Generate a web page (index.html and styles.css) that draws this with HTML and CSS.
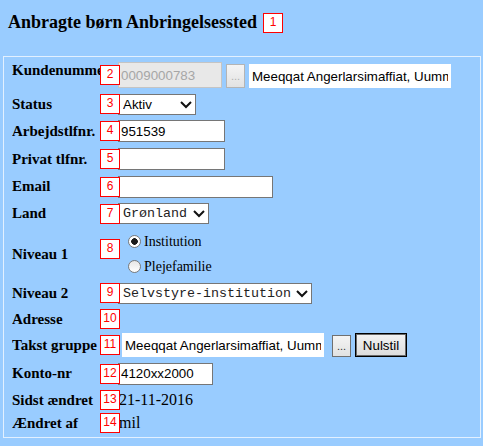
FILE: index.html
```html
<!DOCTYPE html>
<html lang="da">
<head>
  <meta charset="UTF-8" />
  <title>Anbragte børn Anbringelsessted</title>
  <link rel="stylesheet" href="styles.css">
</head>
<body>

<div class="title">Anbragte børn Anbringelsessted<span class="badge badge-inline">1</span></div>

<fieldset class="panel">

  <div class="row r-kunde">
    <label class="lbl lbl-top">Kundenummer</label>
    <span class="badge">2</span>
    <div class="ctrl">
      <input class="txt txt-off w-kunde" value="0009000783" disabled />
      <button class="dots" disabled>...</button>
      <input class="plain" value="Meeqqat Angerlarsimaffiat, Uummannaq" readonly />
    </div>
  </div>

  <div class="row r-status">
    <label class="lbl">Status</label>
    <span class="badge">3</span>
    <span class="selwrap">
      <select class="sel w-status"><option>Aktiv</option><option>Passiv</option></select>
      <svg class="chev" width="12" height="8" viewBox="0 0 12 8"><polyline points="1,1 6,6 11,1" fill="none" stroke="#111" stroke-width="2"/></svg>
    </span>
  </div>

  <div class="row r-arb">
    <label class="lbl">Arbejdstlfnr.</label>
    <span class="badge">4</span>
    <input class="txt w-tlf" value="951539" />
  </div>

  <div class="row r-priv">
    <label class="lbl">Privat tlfnr.</label>
    <span class="badge">5</span>
    <input class="txt w-tlf" value="" />
  </div>

  <div class="row r-email">
    <label class="lbl">Email</label>
    <span class="badge">6</span>
    <input class="txt w-email" value="" />
  </div>

  <div class="row r-land">
    <label class="lbl">Land</label>
    <span class="badge">7</span>
    <span class="selwrap">
      <select class="sel sel-mono w-land"><option>Grønland</option><option>Danmark</option></select>
      <svg class="chev" width="12" height="8" viewBox="0 0 12 8"><polyline points="1,1 6,6 11,1" fill="none" stroke="#111" stroke-width="2"/></svg>
    </span>
  </div>

  <div class="row r-niv1">
    <label class="lbl">Niveau 1</label>
    <span class="badge badge-niv1">8</span>
    <div class="opts">
      <label class="opt"><input type="radio" name="niv1" class="radio" checked />Institution</label>
      <label class="opt"><input type="radio" name="niv1" class="radio" />Plejefamilie</label>
    </div>
  </div>

  <div class="row r-niv2">
    <label class="lbl">Niveau 2</label>
    <span class="badge">9</span>
    <span class="selwrap">
      <select class="sel sel-mono w-niv2"><option>Selvstyre-institution</option></select>
      <svg class="chev" width="12" height="8" viewBox="0 0 12 8"><polyline points="1,1 6,6 11,1" fill="none" stroke="#111" stroke-width="2"/></svg>
    </span>
  </div>

  <div class="row r-adr">
    <label class="lbl">Adresse</label>
    <span class="badge">10</span>
  </div>

  <div class="row r-takst">
    <label class="lbl">Takst gruppe</label>
    <span class="badge">11</span>
    <div class="ctrl">
      <input class="plain plain-takst" value="Meeqqat Angerlarsimaffiat, Uummannaq" readonly />
      <button class="dots dots-on">...</button>
      <button class="btn">Nulstil</button>
    </div>
  </div>

  <div class="row r-konto">
    <label class="lbl">Konto-nr</label>
    <span class="badge">12</span>
    <input class="txt w-konto" value="4120xx2000" />
  </div>

  <div class="row r-sidst">
    <label class="lbl">Sidst ændret</label>
    <span class="badge">13</span>
    <span class="val">21-11-2016</span>
  </div>

  <div class="row r-aendret">
    <label class="lbl">Ændret af</label>
    <span class="badge">14</span>
    <span class="val">mil</span>
  </div>

</fieldset>

</body>
</html>
```

FILE: styles.css
```css
body {
  margin: 0;
  background: #99ccff;
  color: #000;
  font-family: "Liberation Serif", "Times New Roman", serif;
}

.title {
  display: flex;
  align-items: center;
  padding: 12px 8px 0;
  font-size: 18px;
  font-weight: bold;
}

.panel {
  margin: 23px 2px 0 3px;
  padding: 3px 0 2px 8px;
  border: 1px solid #e2f0ff;
  min-width: 0;
}

/* --- rows --- */
.row {
  display: flex;
  align-items: center;
  position: relative;
}
.r-kunde { height: 30px; }
.r-status { height: 28px; }
.r-arb { height: 26px; }
.r-priv { height: 30px; }
.r-email { height: 25px; }
.r-land { height: 29px; }
.r-niv1 { height: 52px; }
.r-niv2 { height: 26px; }
.r-adr { height: 26px; }
.r-takst { height: 26px; }
.r-konto { height: 31px; }
.r-sidst { height: 22px; }
.r-aendret { height: 24px; }

.lbl {
  width: 106px;
  flex: none;
  font-size: 15px;
  font-weight: bold;
  white-space: nowrap;
  overflow: hidden;
}
.lbl-top {
  align-self: flex-start;
  padding-top: 2px;
}

/* numbered markers */
.badge {
  position: absolute;
  left: 88px;
  top: 50%;
  margin-top: -10px;
  width: 20px;
  height: 20px;
  box-sizing: border-box;
  border: 1px solid #ff0000;
  background: #fff;
  color: #ff0000;
  font: 12px "Liberation Sans", Arial, sans-serif;
  line-height: 17px;
  text-align: center;
  z-index: 1;
}
.badge-inline {
  position: static;
  margin: 0 0 0 6px;
  flex: none;
}
.badge-niv1 {
  top: 11px;
  margin-top: 0;
}

/* --- controls --- */
.ctrl {
  display: flex;
  align-items: flex-end;
  gap: 4px;
}

.txt {
  box-sizing: border-box;
  height: 22px;
  margin: 0;
  padding: 1px 2px;
  border: 1px solid #767676;
  background: #fff;
  color: #000;
  font: 13.33px "Liberation Sans", Arial, sans-serif;
}
.txt-off {
  height: 26px;
  border-color: #c4c4c4;
  background: #e8e8e8;
  color: #a6a6a6;
}
.w-kunde { width: 104px; }
.w-tlf { width: 107px; }
.w-email { width: 155px; }
.w-konto { width: 95px; }

.plain {
  box-sizing: border-box;
  width: 202px;
  height: 24px;
  margin: 0;
  padding: 0 3px;
  border: none;
  background: #fff;
  color: #000;
  font: 13.33px "Liberation Sans", Arial, sans-serif;
}
.plain-takst {
  margin-left: 4px;
  margin-right: 4px;
}

.dots {
  box-sizing: border-box;
  width: 19px;
  height: 24px;
  margin: 0;
  padding: 0;
  border: 1px solid #b4b4b4;
  background: linear-gradient(#f4f4f4, #e2e2e2);
  color: #b0b0b0;
  font: 11px "Liberation Sans", Arial, sans-serif;
}
.dots-on {
  height: 22px;
  border-color: #707070;
  color: #333;
}

.btn {
  box-sizing: border-box;
  width: 52px;
  height: 24px;
  margin: 0;
  padding: 0;
  border: 1px solid #000;
  box-shadow: inset 0 0 0 1px #6a6a6a;
  background: linear-gradient(#f3f3f3, #dcdcdc);
  color: #000;
  font: 13.33px "Liberation Sans", Arial, sans-serif;
}

/* selects with drawn arrow */
.selwrap {
  position: relative;
  display: inline-block;
}
.sel {
  appearance: none;
  -webkit-appearance: none;
  box-sizing: border-box;
  height: 21px;
  margin: 0;
  padding: 0 0 0 4px;
  border: 1px solid #767676;
  border-radius: 0;
  background: #fff;
  color: #000;
  font: 13.33px "Liberation Sans", Arial, sans-serif;
  display: block;
}
.sel-mono {
  font-family: "Liberation Mono", "Courier New", monospace;
  color: #222;
}
.w-status { width: 78px; }
.w-land { width: 91px; }
.w-niv2 { width: 194px; }
.chev {
  position: absolute;
  right: 4px;
  top: 7px;
  pointer-events: none;
}

/* radios */
.opts {
  display: flex;
  flex-direction: column;
}
.opt {
  display: flex;
  align-items: center;
  height: 25px;
  font-size: 14px;
}
.radio {
  appearance: none;
  -webkit-appearance: none;
  width: 13px;
  height: 13px;
  margin: 0 3px 0 10px;
  border: 1px solid #7a7a7a;
  border-radius: 50%;
  background: linear-gradient(#e6e6e6, #fff);
}
.radio:checked {
  background: radial-gradient(circle, #1a1a1a 0, #1a1a1a 3px, #fff 3.6px);
}

.val {
  font-size: 16px;
  padding-left: 1px;
}
```
